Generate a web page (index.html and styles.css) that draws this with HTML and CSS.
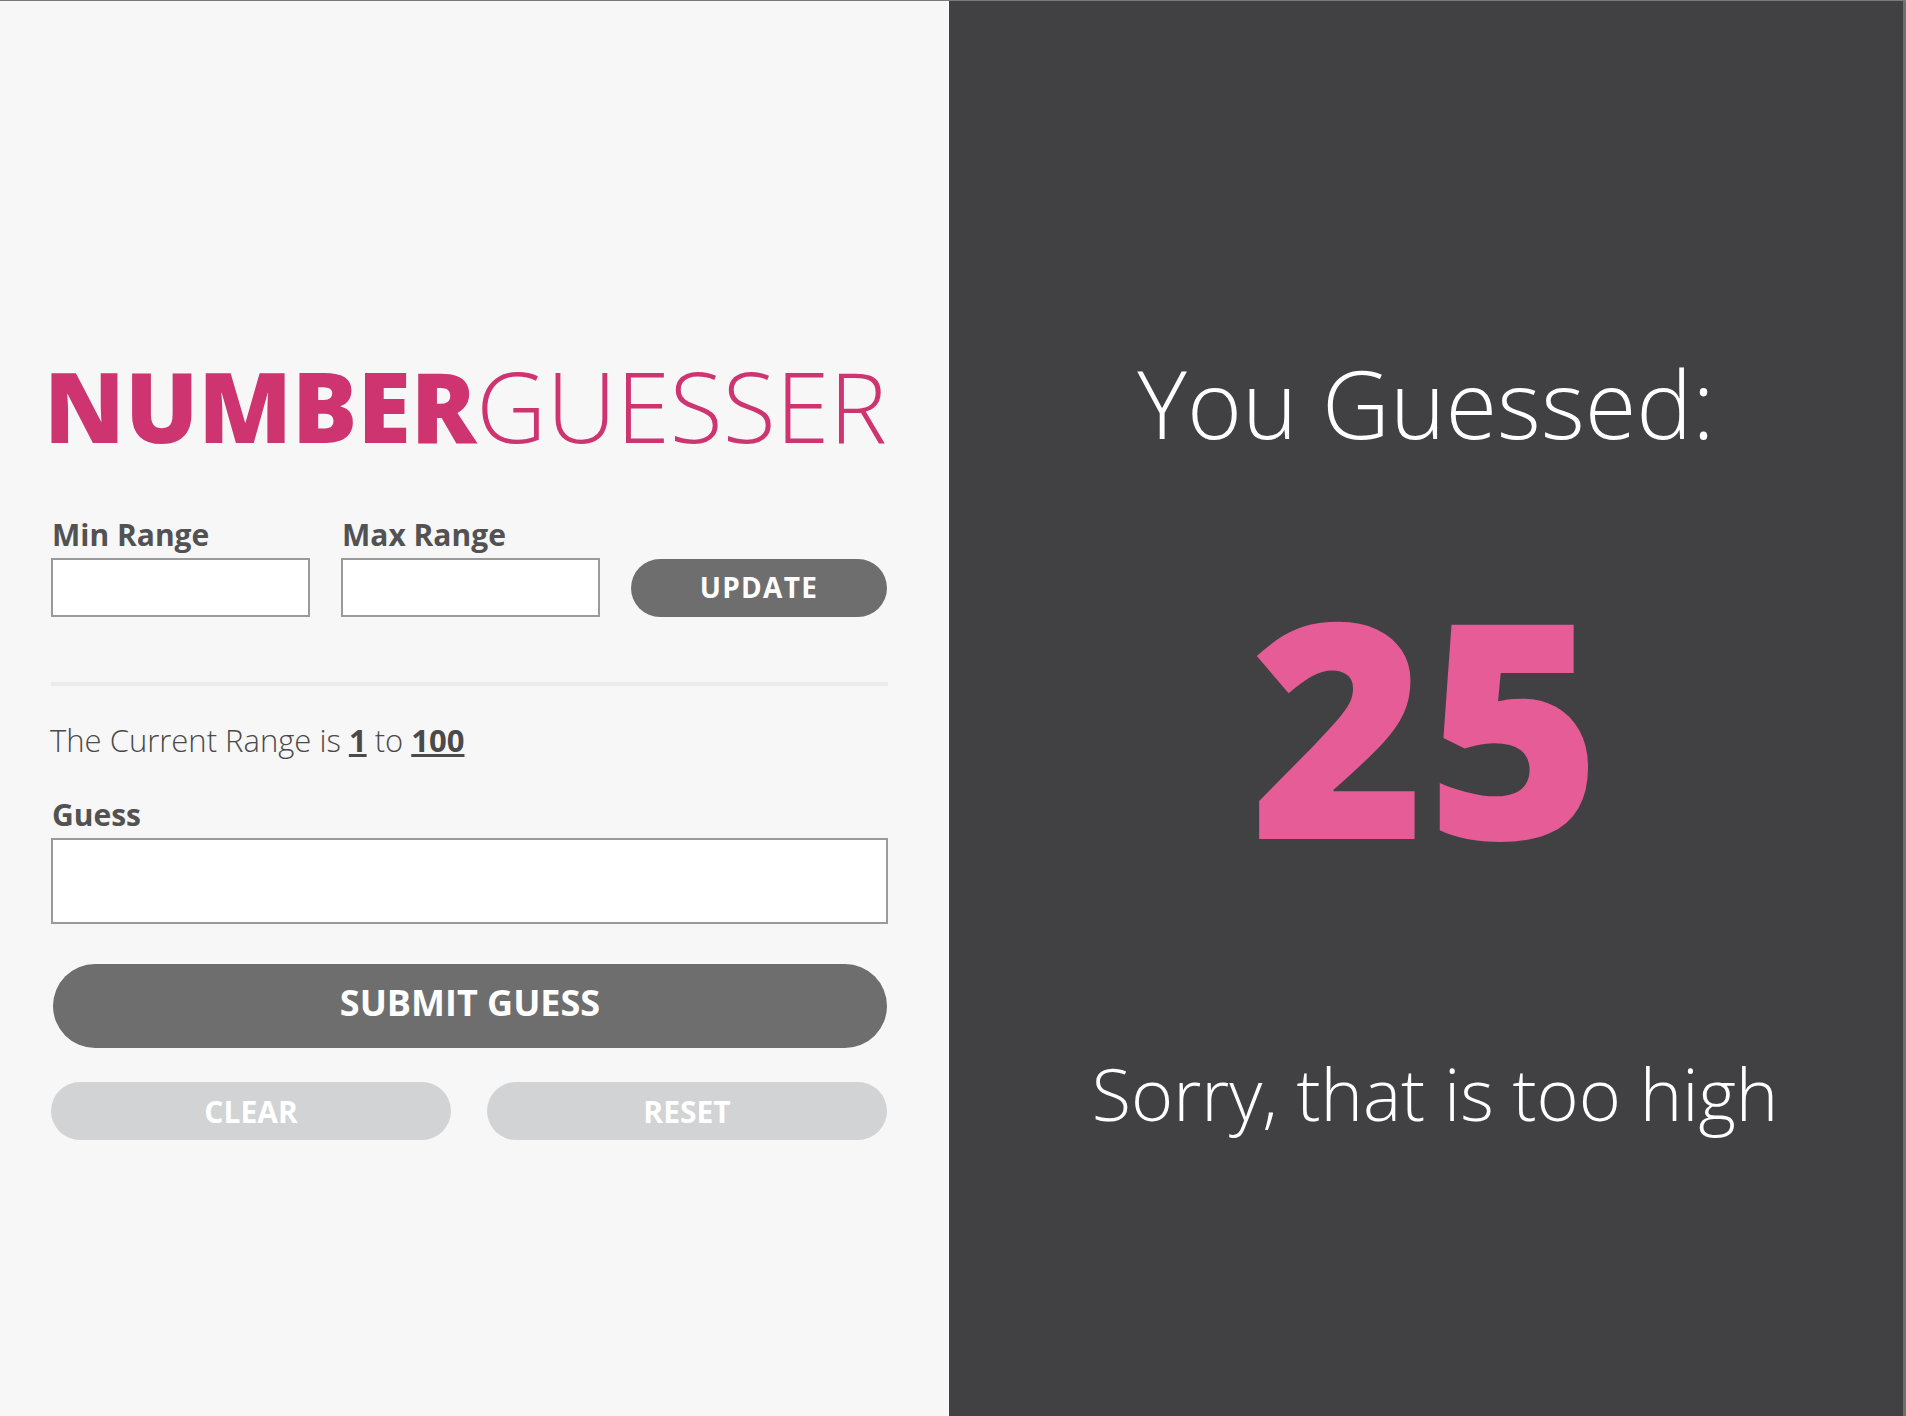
FILE: index.html
```html
<!DOCTYPE html>
<html lang="en">
<head>
<meta charset="utf-8">
<title>Number Guesser</title>
<link rel="stylesheet" href="styles.css">
</head>
<body>
<main class="app">
  <section class="left">
    <div class="content">
      <h1 class="title"><span class="title-bold">NUMBER</span><span class="title-light">GUESSER</span></h1>
      <div class="range-row">
        <div class="field">
          <label class="label" for="min">Min Range</label>
          <input class="input small" id="min" type="text">
        </div>
        <div class="field">
          <label class="label" for="max">Max Range</label>
          <input class="input small" id="max" type="text">
        </div>
        <button class="btn btn-update">UPDATE</button>
      </div>
      <hr class="divider">
      <p class="range-text">The Current Range is <strong>1</strong> to <strong>100</strong></p>
      <label class="label" for="guess">Guess</label>
      <input class="input big" id="guess" type="text">
      <button class="btn btn-submit">SUBMIT GUESS</button>
      <div class="btn-row">
        <button class="btn btn-light">CLEAR</button>
        <button class="btn btn-light">RESET</button>
      </div>
    </div>
  </section>
  <section class="right">
    <h2 class="guessed">You Guessed:</h2>
    <div class="number">25</div>
    <p class="message">Sorry, that is too high</p>
  </section>
</main>
</body>
</html>
```
FILE: styles.css
```css
* { box-sizing: border-box; }
html, body { margin: 0; padding: 0; }
body {
  font-family: "Open Sans", "Liberation Sans", sans-serif;
  border-top: 1px solid #7a7a7a;
  background: #414143;
}
.app {
  display: flex;
  height: 1415px;
  border-right: 3px solid #6f6f6f;
}
.left {
  width: 949px;
  background: #f7f7f7;
  border-right: 1px solid #fbfbfb;
}
.content {
  padding: 356px 0 0 51px;
  width: 888px;
}
.title {
  margin: 0 0 0 -7px;
  font-size: 97px;
  line-height: 1;
  font-weight: 400;
  white-space: nowrap;
  color: #cd3470;
}
.title-bold { font-weight: 800; }
.title-light { font-weight: 300; }
.range-row {
  display: flex;
  align-items: flex-end;
  margin-top: 64px;
}
.field { display: flex; flex-direction: column; margin-right: 31px; }
.label {
  display: block;
  font-size: 30px;
  line-height: 34px;
  font-weight: 700;
  color: #525252;
  margin-bottom: 6px;
  padding-left: 1px;
}
.input {
  display: block;
  border: 2px solid #9a9a9a;
  background: #fff;
  margin: 0;
  padding: 0;
  font-family: inherit;
}
.input.small { width: 259px; height: 59px; }
.input.big { width: 837px; height: 86px; }
.btn {
  display: block;
  border: none;
  font-family: inherit;
  font-weight: 700;
  color: #fff;
  cursor: pointer;
  padding: 0;
}
.btn-update {
  width: 256px;
  height: 58px;
  border-radius: 29px;
  background: #6e6e6e;
  font-size: 28px;
  letter-spacing: 1.3px;
  padding-bottom: 2px;
}
.divider {
  margin: 65px 0 0 0;
  width: 837px;
  height: 4px;
  border: none;
  background: #ebebeb;
}
.range-text {
  margin: 34px 0 38px -1px;
  font-size: 31px;
  line-height: 40px;
  font-weight: 300;
  color: #4a4a4a;
}
.range-text strong {
  font-weight: 700;
  text-decoration: underline;
  color: #4a4a4a;
}
.btn-submit {
  margin: 40px 0 0 2px;
  width: 834px;
  height: 84px;
  border-radius: 42px;
  background: #6e6e6e;
  font-size: 36px;
  padding-bottom: 8px;
}
.btn-row {
  display: flex;
  gap: 36px;
  margin-top: 34px;
  width: 837px;
}
.btn-light {
  width: 400px;
  height: 58px;
  border-radius: 29px;
  background: #d2d3d4;
  font-size: 30px;
}
.right {
  flex: 1;
  background: #414143;
  display: flex;
  flex-direction: column;
  align-items: center;
  padding-top: 355px;
  color: #fff;
}
.guessed {
  margin: 0;
  font-size: 94px;
  line-height: 1;
  font-weight: 300;
}
.number {
  margin-top: 123px;
  font-size: 300px;
  line-height: 1;
  font-weight: 800;
  color: #e55c97;
}
.message {
  margin: 184px 0 0 18px;
  font-size: 72px;
  line-height: 1;
  font-weight: 300;
}
```
